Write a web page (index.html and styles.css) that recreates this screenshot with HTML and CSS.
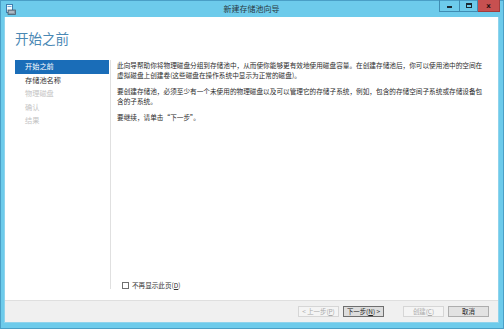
FILE: index.html
```html
<!DOCTYPE html>
<html lang="zh-CN">
<head>
    <meta charset="UTF-8">
    <meta name="viewport" content="width=device-width, initial-scale=1.0">
    <title>新建存储池向导</title>
    <link rel="stylesheet" href="styles.css">
</head>
<body>
    <div class="window">
        <!-- Title bar -->
        <div class="titlebar">
            <svg class="app-icon" width="10" height="11" viewBox="0 0 10 11">
                <rect x="0.5" y="0.5" width="6" height="8" fill="#f4fbff" stroke="#3e7fb0"/>
                <rect x="1.5" y="2" width="4" height="1" fill="#6aa6d6"/>
                <rect x="2" y="6" width="7.5" height="4.5" fill="#8a9aa8" stroke="#4d5d6b" stroke-width="0.8"/>
                <rect x="3" y="7.5" width="5" height="1" fill="#cfd8df"/>
            </svg>
            <span class="title">新建存储池向导</span>
            <div class="controls">
                <span class="ctl ctl-min"><i></i></span>
                <span class="ctl ctl-max"><i></i></span>
                <span class="ctl ctl-close">x</span>
            </div>
        </div>

        <div class="client">
            <div class="header">
                <h1 class="page-title">开始之前</h1>
            </div>

            <div class="wizard-body">
                <ul class="steps">
                    <li class="step active">开始之前</li>
                    <li class="step">存储池名称</li>
                    <li class="step disabled">物理磁盘</li>
                    <li class="step disabled">确认</li>
                    <li class="step disabled">结果</li>
                </ul>

                <div class="content">
                    <div class="text">
                        <p>此向导帮助你将物理磁盘分组到存储池中，从而使你能够更有效地使用磁盘容量。在创建存储池后，你可以使用池中的空间在虚拟磁盘上创建卷(这些磁盘在操作系统中显示为正常的磁盘)。</p>
                        <p>要创建存储池，必须至少有一个未使用的物理磁盘以及可以管理它的存储子系统，例如，包含的存储空间子系统或存储设备包含的子系统。</p>
                        <p>要继续，请单击“下一步”。</p>
                    </div>

                    <label class="skip">
                        <span class="checkbox"></span>
                        <span>不再显示此页(<u>D</u>)</span>
                    </label>
                </div>
            </div>

            <div class="footer">
                <button class="btn" disabled>&lt; 上一步(<u>P</u>)</button>
                <button class="btn btn-default">下一步(<u>N</u>) &gt;</button>
                <button class="btn btn-create" disabled>创建(<u>C</u>)</button>
                <button class="btn">取消</button>
            </div>
        </div>
    </div>
</body>
</html>
```

FILE: styles.css
```css
* {
    margin: 0;
    padding: 0;
    box-sizing: border-box;
    font-family: "Noto Sans CJK SC", "Noto Sans", sans-serif;
}

body {
    width: 504px;
    height: 329px;
    overflow: hidden;
    background-color: #6dcbeb;
}

.window {
    width: 504px;
    height: 329px;
    display: flex;
    flex-direction: column;
    background-color: #6dcbeb;
    border: 1px solid #4a9fc6;
    padding: 0 4px 5px 3px;
}

/* Title bar */
.titlebar {
    height: 16px;
    display: flex;
    align-items: flex-start;
    position: relative;
}

.app-icon {
    margin: 3px 0 0 2px;
}

.title {
    position: absolute;
    left: 0;
    right: 0;
    top: 2px;
    text-align: center;
    font-size: 8px;
    line-height: 12px;
    color: #2a3a44;
}

.controls {
    margin-left: auto;
    display: flex;
    margin-top: -1px;
    margin-right: -1px;
}

.ctl {
    height: 12px;
    display: flex;
    align-items: center;
    justify-content: center;
    border: 1px solid #3f8cb2;
    border-top: none;
}

.ctl-min {
    width: 20px;
    border-right: none;
}

.ctl-min i {
    width: 5px;
    height: 2px;
    margin-top: 3px;
    background-color: #1c2a33;
}

.ctl-max {
    width: 19px;
}

.ctl-max i {
    width: 6px;
    height: 5px;
    border: 1px solid #1c2a33;
    border-top-width: 2px;
}

.ctl-close {
    width: 22px;
    background-color: #c75050;
    border-color: #a23c3c;
    border-left: none;
    font-family: "DejaVu Sans", sans-serif;
    font-size: 7px;
    font-weight: bold;
    color: #2b1010;
}

/* Client area */
.client {
    flex: 1;
    display: flex;
    flex-direction: column;
    background-color: #ffffff;
    border: 1px solid #8fd3ec;
    border-top: none;
}

.header {
    padding: 13px 10px 0;
}

.page-title {
    font-size: 13.5px;
    font-weight: normal;
    line-height: 17px;
    color: #4a88b4;
}

.wizard-body {
    flex: 1;
    display: flex;
    padding: 13px 0 11px 10px;
}

.steps {
    list-style: none;
    width: 96px;
    border-right: 1px solid #e0e0e0;
}

.step {
    height: 13.5px;
    line-height: 13px;
    padding-left: 10px;
    margin-right: 1px;
    font-size: 7.2px;
    color: #333333;
}

.step.active {
    background-color: #1a6db8;
    color: #ffffff;
}

.step.disabled {
    color: #c4c4c4;
}

.content {
    flex: 1;
    display: flex;
    flex-direction: column;
    padding-left: 6px;
}

.text {
    width: 370px;
    font-size: 6.65px;
    line-height: 10px;
    color: #2b2b2b;
}

.text p {
    margin-bottom: 6px;
}

.skip {
    margin-top: auto;
    display: flex;
    align-items: center;
    gap: 3px;
    padding-left: 5px;
    font-size: 6.6px;
    line-height: 8px;
    color: #333333;
}

.checkbox {
    width: 7px;
    height: 7px;
    border: 1px solid #707070;
    background-color: #ffffff;
}

/* Footer */
.footer {
    height: 22px;
    display: flex;
    align-items: center;
    justify-content: flex-end;
    gap: 4px;
    padding-right: 9px;
    background-color: #f0f0f0;
    border-top: 1px solid #dfdfdf;
}

.btn {
    width: 41px;
    height: 11px;
    font-size: 6.4px;
    line-height: 9px;
    color: #222222;
    background-color: #e2e2e2;
    border: 1px solid #adadad;
}

.btn:disabled {
    color: #a9a9a9;
    background-color: #f4f4f4;
    border-color: #d6d6d6;
}

.btn-default {
    border-color: #6f6f6f;
    background-color: #dddddd;
}

.btn-create {
    margin-left: 15px;
}
```
